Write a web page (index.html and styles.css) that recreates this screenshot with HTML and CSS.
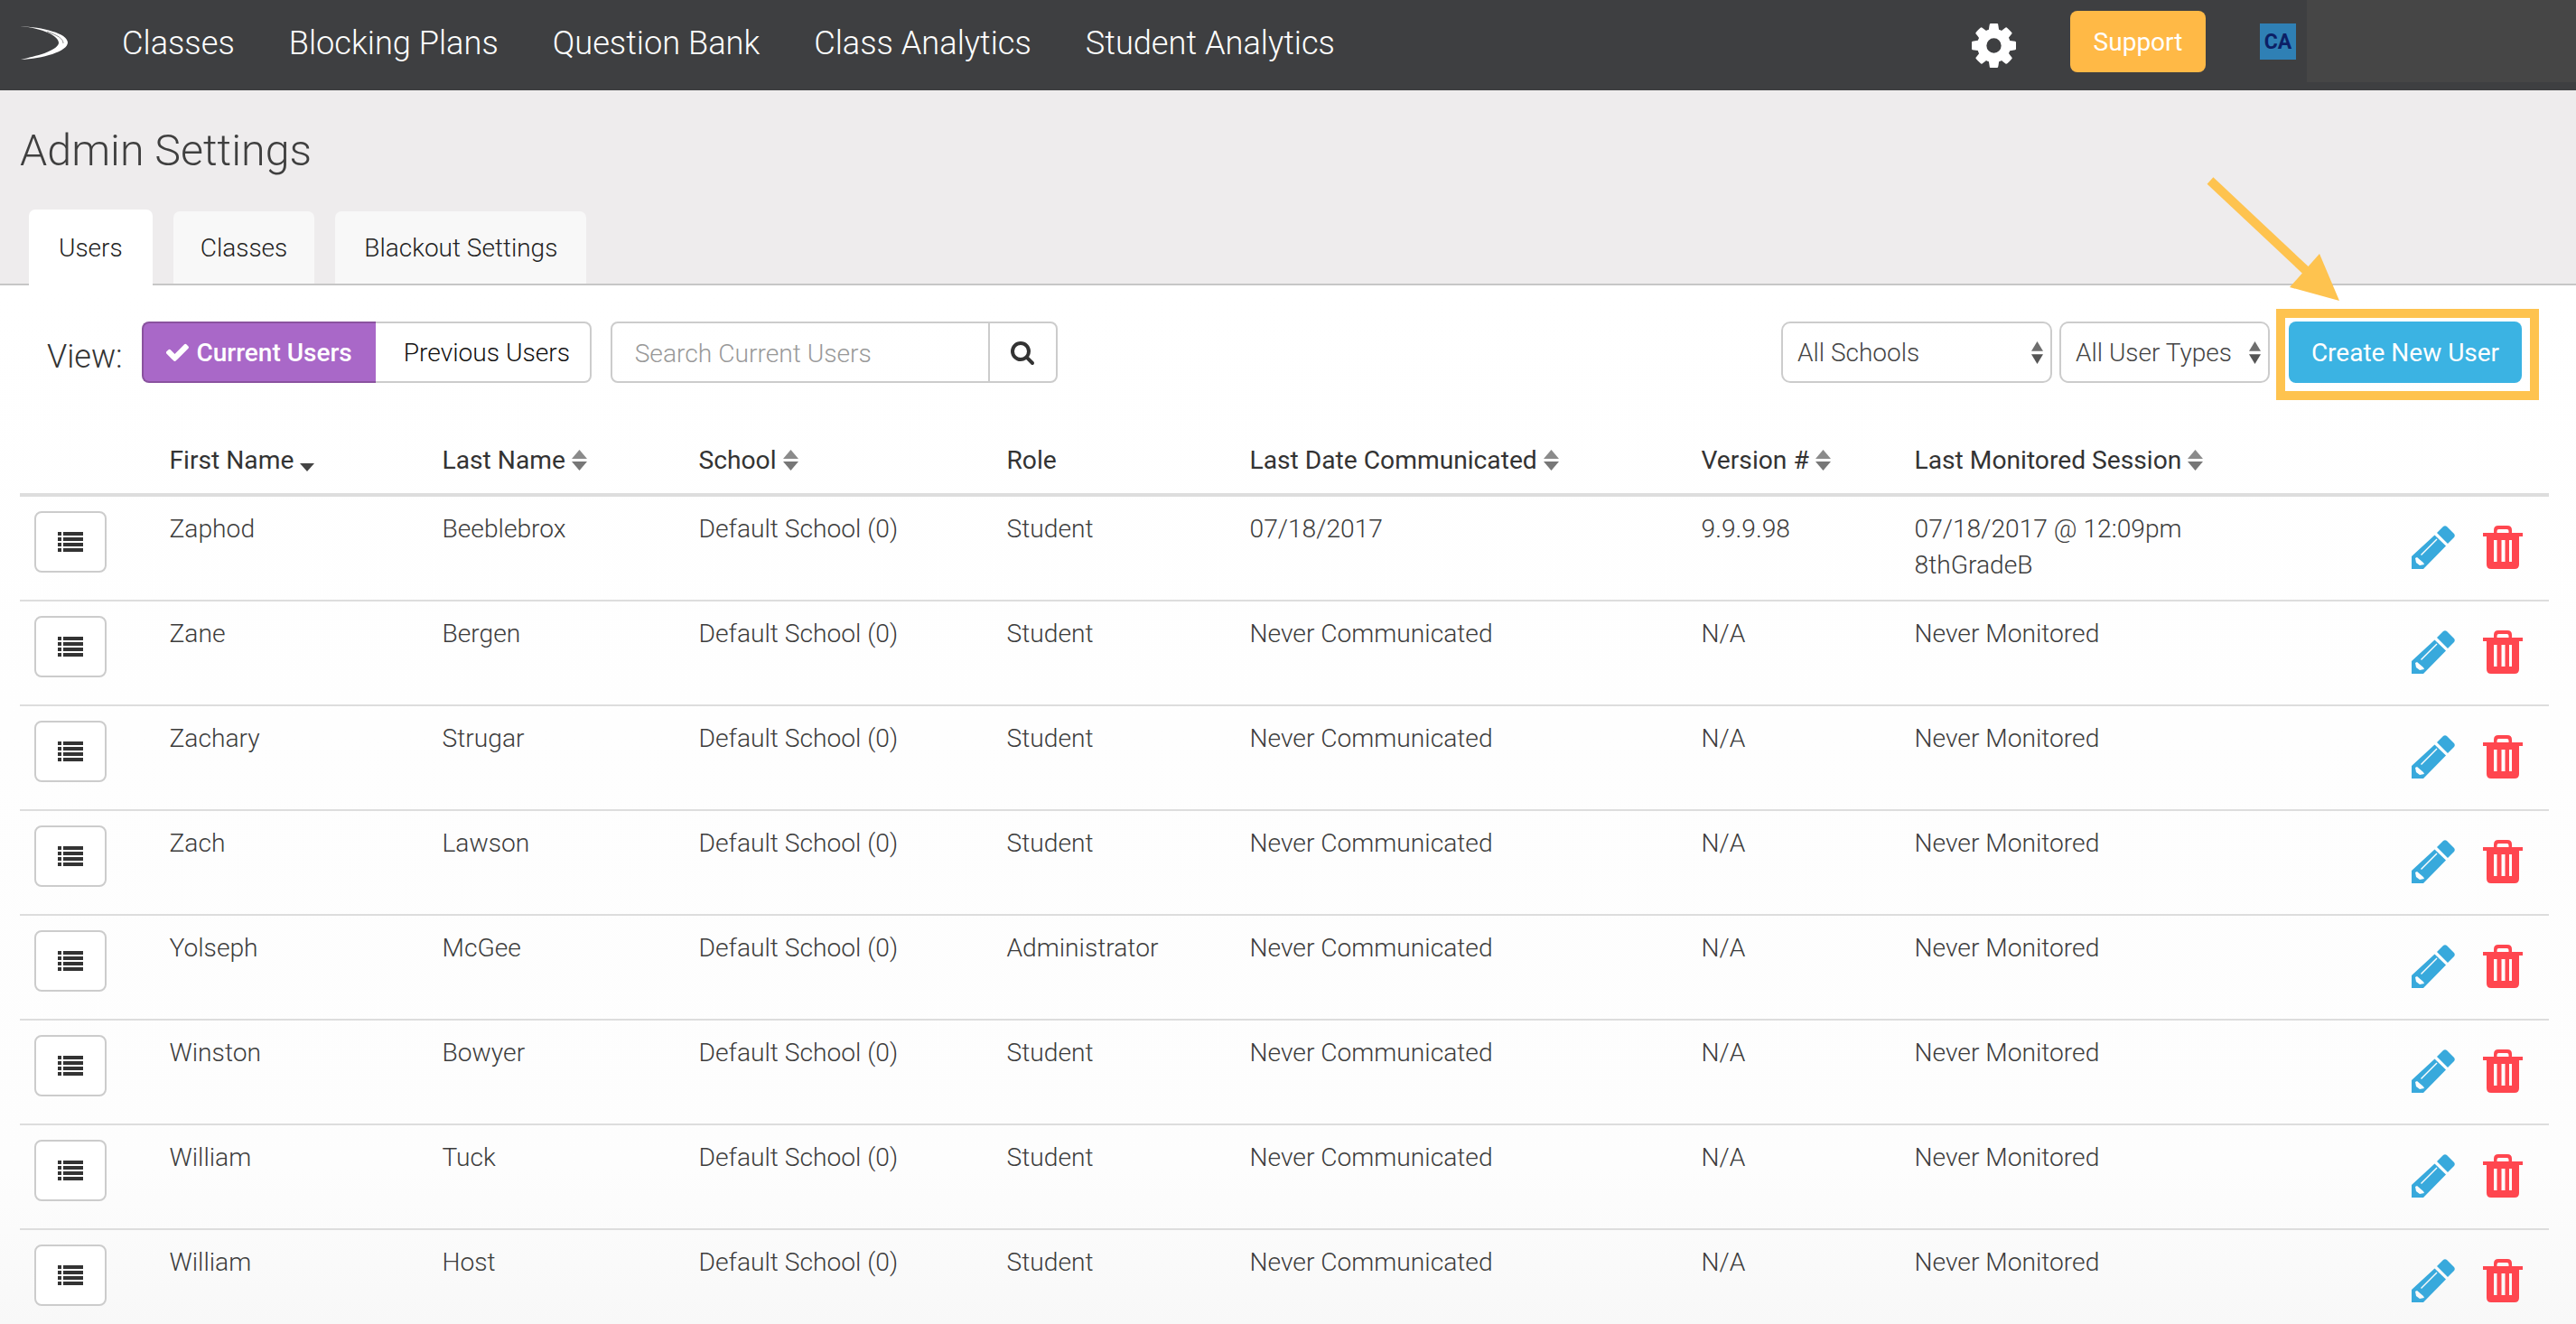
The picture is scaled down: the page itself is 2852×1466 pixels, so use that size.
FILE: index.html
```html
<!DOCTYPE html>
<html lang="en">
<head>
  <meta charset="UTF-8">
  <title>Admin Settings</title>
  <link rel="stylesheet" href="styles.css">
</head>
<body>
  <svg class="defs" width="0" height="0">
    <symbol id="i-list" viewBox="0 0 28 22">
      <path d="M0 0h4v4H0zM6 0h22v4H6zM0 6h4v4H0zM6 6h22v4H6zM0 12h4v4H0zM6 12h22v4H6zM0 18h4v4H0zM6 18h22v4H6z"/>
    </symbol>
    <symbol id="i-sort" viewBox="0 0 16 22" preserveAspectRatio="none">
      <path d="M8 0l8 9.500H0z" opacity="0.85"/>
      <path d="M0 12.500h16L8 22z"/>
    </symbol>
    <symbol id="i-pencil" viewBox="0 0 48 48">
      <path d="M28 8l7-7q2-1.500 4 0l8 8q1.500 2 0 4l-7 7z"/>
      <path fill-rule="evenodd" d="M25.500 10.500L38 22.500 13 48H0V34zM27.500 14.500L10 32l1 1 17.500-17.500zM4 36l1 5 4 3 5-1-1-2-7-6z"/>
    </symbol>
    <symbol id="i-trash" viewBox="0 0 44 48">
      <path fill-rule="evenodd" d="M12 8V5q0-5 5-5h10q5 0 5 5v3h12v4H40v31q0 5-5 5H9q-5 0-5-5V12H0V8zM15.500 8h13V6q0-2-2-2h-9q-2 0-2 2zM12 16v24h3.500V16zM20.500 16v24h4V16zM29 16v24h3V16z"/>
    </symbol>
  </svg>

  <nav class="navbar">
    <svg class="logo" viewBox="0 0 53 37">
      <path d="M0 0C25 1 53 8 53 18 53 28 25 36 1 37 18 33 40 28 43 19 44 11 25 2 0 0z" fill="#fff"/>
      <path d="M30 6C42 10 48 14 48 19" fill="none" stroke="#8d8d8d" stroke-width="1"/>
    </svg>
    <a class="nav-link">Classes</a>
    <a class="nav-link">Blocking Plans</a>
    <a class="nav-link">Question Bank</a>
    <a class="nav-link">Class Analytics</a>
    <a class="nav-link">Student Analytics</a>
    <svg class="gear" viewBox="128 128 1536 1536"><path fill="#fff" d="M1152 896q0-106-75-181t-181-75-181 75-75 181 75 181 181 75 181-75 75-181zm512-109v222q0 12-8 23t-20 13l-185 28q-19 54-39 91 35 50 107 138 10 12 10 25t-9 23q-27 37-99 108t-94 71q-12 0-26-9l-138-108q-44 23-91 38-16 136-29 186-7 28-36 28h-222q-14 0-24.500-8.500t-11.500-21.500l-28-184q-49-16-90-37l-141 107q-10 9-25 9-14 0-25-11-126-114-165-168-7-10-7-23 0-12 8-23 15-21 51-66.500t54-70.500q-27-50-41-99l-183-27q-13-2-21-12.500t-8-23.500v-222q0-12 8-23t19-13l186-28q14-46 39-92-40-57-107-138-10-12-10-24 0-10 9-23 26-36 98.500-107.500t94.500-71.500q13 0 26 10l138 107q44-23 91-38 16-136 29-186 7-28 36-28h222q14 0 24.500 8.500t11.500 21.500l28 184q49 16 90 37l142-107q9-9 24-9 13 0 25 10 129 119 165 170 7 8 7 22 0 12-8 23-15 21-51 66.500t-54 70.500q26 50 41 98l183 28q13 2 21 12.500t8 23.500z"/></svg>
    <a class="support-btn">Support</a>
    <span class="avatar">CA</span>
    <div class="nav-panel"></div>
  </nav>

  <header class="page-head">
    <h1 class="page-title">Admin Settings</h1>
    <div class="tabs">
      <a class="tab active">Users</a>
      <a class="tab">Classes</a>
      <a class="tab wide">Blackout Settings</a>
    </div>
  </header>

  <main class="content">
    <div class="toolbar">
      <span class="view-label">View:</span>
      <div class="btn-group">
        <a class="toggle on">
          <svg class="check" viewBox="128 300 1544 1200"><path fill="#fff" d="M1671 566q0 40-28 68l-724 724-136 136q-28 28-68 28t-68-28l-136-136-362-362q-28-28-28-68t28-68l136-136q28-28 68-28t68 28l294 295 656-657q28-28 68-28t68 28l136 136q28 28 28 68z"/></svg>
          Current Users
        </a>
        <a class="toggle">Previous Users</a>
      </div>
      <div class="search">
        <input class="search-input" type="text" placeholder="Search Current Users">
        <span class="search-btn">
          <svg class="search-icon" viewBox="0 0 1792 1792"><path fill="#333" d="M1216 832q0-185-131.500-316.500t-316.500-131.500-316.500 131.500-131.500 316.500 131.500 316.500 316.500 131.500 316.500-131.500 131.500-316.500zm512 832q0 52-38 90t-90 38q-54 0-90-38l-343-342q-179 124-399 124-143 0-273.500-55.500t-225-150-150-225-55.500-273.500 55.500-273.500 150-225 225-150 273.500-55.500 273.500 55.500 225 150 150 225 55.500 273.500q0 220-124 399l343 343q37 37 37 90z"/></svg>
        </span>
      </div>
      <div class="select schools">All Schools<svg class="select-arrows"><use href="#i-sort"/></svg></div>
      <div class="select types">All User Types<svg class="select-arrows"><use href="#i-sort"/></svg></div>
      <div class="highlight"><a class="create-btn">Create New User</a></div>
    </div>

    <table class="users">
      <colgroup>
        <col class="c-menu"><col class="c-first"><col class="c-last"><col class="c-school"><col class="c-role"><col class="c-date"><col class="c-version"><col class="c-session"><col>
      </colgroup>
      <thead>
        <tr>
          <th></th>
          <th>First Name <svg class="caret" viewBox="0 0 16 9"><path d="M0 0h16L8 9z"/></svg></th>
          <th>Last Name <svg class="sort"><use href="#i-sort"/></svg></th>
          <th>School <svg class="sort"><use href="#i-sort"/></svg></th>
          <th>Role</th>
          <th>Last Date Communicated <svg class="sort"><use href="#i-sort"/></svg></th>
          <th>Version # <svg class="sort"><use href="#i-sort"/></svg></th>
          <th>Last Monitored Session <svg class="sort"><use href="#i-sort"/></svg></th>
          <th></th>
        </tr>
      </thead>
      <tbody>
        <tr>
          <td><a class="menu-btn"><svg class="list-icon"><use href="#i-list"/></svg></a></td>
          <td>Zaphod</td><td>Beeblebrox</td><td>Default School (0)</td><td>Student</td><td>07/18/2017</td><td>9.9.9.98</td>
          <td>07/18/2017 @ 12:09pm<br>8thGradeB</td>
          <td><div class="actions"><svg class="pencil"><use href="#i-pencil"/></svg><svg class="trash"><use href="#i-trash"/></svg></div></td>
        </tr>
        <tr>
          <td><a class="menu-btn"><svg class="list-icon"><use href="#i-list"/></svg></a></td>
          <td>Zane</td><td>Bergen</td><td>Default School (0)</td><td>Student</td><td>Never Communicated</td><td>N/A</td>
          <td>Never Monitored</td>
          <td><div class="actions"><svg class="pencil"><use href="#i-pencil"/></svg><svg class="trash"><use href="#i-trash"/></svg></div></td>
        </tr>
        <tr>
          <td><a class="menu-btn"><svg class="list-icon"><use href="#i-list"/></svg></a></td>
          <td>Zachary</td><td>Strugar</td><td>Default School (0)</td><td>Student</td><td>Never Communicated</td><td>N/A</td>
          <td>Never Monitored</td>
          <td><div class="actions"><svg class="pencil"><use href="#i-pencil"/></svg><svg class="trash"><use href="#i-trash"/></svg></div></td>
        </tr>
        <tr>
          <td><a class="menu-btn"><svg class="list-icon"><use href="#i-list"/></svg></a></td>
          <td>Zach</td><td>Lawson</td><td>Default School (0)</td><td>Student</td><td>Never Communicated</td><td>N/A</td>
          <td>Never Monitored</td>
          <td><div class="actions"><svg class="pencil"><use href="#i-pencil"/></svg><svg class="trash"><use href="#i-trash"/></svg></div></td>
        </tr>
        <tr>
          <td><a class="menu-btn"><svg class="list-icon"><use href="#i-list"/></svg></a></td>
          <td>Yolseph</td><td>McGee</td><td>Default School (0)</td><td>Administrator</td><td>Never Communicated</td><td>N/A</td>
          <td>Never Monitored</td>
          <td><div class="actions"><svg class="pencil"><use href="#i-pencil"/></svg><svg class="trash"><use href="#i-trash"/></svg></div></td>
        </tr>
        <tr>
          <td><a class="menu-btn"><svg class="list-icon"><use href="#i-list"/></svg></a></td>
          <td>Winston</td><td>Bowyer</td><td>Default School (0)</td><td>Student</td><td>Never Communicated</td><td>N/A</td>
          <td>Never Monitored</td>
          <td><div class="actions"><svg class="pencil"><use href="#i-pencil"/></svg><svg class="trash"><use href="#i-trash"/></svg></div></td>
        </tr>
        <tr>
          <td><a class="menu-btn"><svg class="list-icon"><use href="#i-list"/></svg></a></td>
          <td>William</td><td>Tuck</td><td>Default School (0)</td><td>Student</td><td>Never Communicated</td><td>N/A</td>
          <td>Never Monitored</td>
          <td><div class="actions"><svg class="pencil"><use href="#i-pencil"/></svg><svg class="trash"><use href="#i-trash"/></svg></div></td>
        </tr>
        <tr>
          <td><a class="menu-btn"><svg class="list-icon"><use href="#i-list"/></svg></a></td>
          <td>William</td><td>Host</td><td>Default School (0)</td><td>Student</td><td>Never Communicated</td><td>N/A</td>
          <td>Never Monitored</td>
          <td><div class="actions"><svg class="pencil"><use href="#i-pencil"/></svg><svg class="trash"><use href="#i-trash"/></svg></div></td>
        </tr>
      </tbody>
    </table>

    <svg class="arrow" viewBox="0 0 160 150">
      <path d="M4 9L118 116" fill="none" stroke="#fec34f" stroke-width="10"/>
      <path d="M125 90L147 142 92 127z" fill="#fec34f"/>
    </svg>
  </main>
</body>
</html>
```

FILE: styles.css
```css
* {
  box-sizing: border-box;
}

html, body {
  height: 1466px;
  overflow: hidden;
}

body {
  margin: 0;
  font-family: Roboto, "Liberation Sans", sans-serif;
  font-weight: 300;
  font-size: 28px;
  color: #333;
  background: #fff;
}

.defs {
  position: absolute;
}

.navbar {
  display: flex;
  align-items: center;
  height: 100px;
  background: #3e3f41;
  padding-left: 22px;
}

.logo {
  width: 53px;
  height: 37px;
  margin-top: -6px;
  margin-right: 60px;
}

.nav-link {
  font-size: 36.200px;
  color: #fff;
  margin-right: 60px;
  margin-top: -6px;
}

.gear {
  width: 49px;
  height: 49px;
  margin-left: auto;
  margin-right: 60px;
}

.support-btn {
  display: flex;
  align-items: center;
  justify-content: center;
  width: 150px;
  height: 68px;
  margin-top: -8px;
  background: #ffb946;
  border-radius: 8px;
  color: #fff;
  font-size: 28px;
  font-weight: 400;
}

.avatar {
  display: flex;
  align-items: center;
  justify-content: center;
  width: 40px;
  height: 40px;
  margin-left: 60px;
  margin-right: 12px;
  margin-top: -8px;
  background: #2f80b5;
  color: #0c1f66;
  font-size: 23px;
  font-weight: 700;
}

.nav-panel {
  align-self: flex-start;
  width: 298px;
  height: 91px;
  background: #464646;
}

.page-head {
  background: #eeeced;
  padding-top: 37px;
  border-bottom: 2px solid #c6c6c6;
}

.page-title {
  margin: 0 0 35px 22px;
  font-size: 48.400px;
  font-weight: 300;
  line-height: 60px;
  color: #3f3f3f;
}

.tabs {
  display: flex;
  align-items: flex-end;
  gap: 23px;
  height: 82px;
  padding-left: 32px;
}

.tab {
  display: flex;
  align-items: center;
  height: 80px;
  padding: 0 30px;
  background: #f8f8f8;
  border-radius: 7px 7px 0 0;
  font-size: 28px;
  color: #222;
}

.tab.wide {
  padding: 0 32px;
}

.tab.active {
  height: 84px;
  margin-bottom: -2px;
  padding: 0 33px;
  background: #fff;
}

.content {
  position: relative;
  height: 1150px;
  padding-top: 40px;
  background: linear-gradient(#fff, #fdfdfd 85%, #f8f8f8);
}

.toolbar {
  display: flex;
  align-items: center;
  height: 68px;
  margin: 0 41px 50px 52px;
}

.view-label {
  font-size: 36px;
  margin-top: 10px;
  margin-right: 21px;
}

.btn-group {
  display: flex;
  height: 68px;
  margin-right: 21px;
}

.toggle {
  display: flex;
  align-items: center;
  width: 239px;
  height: 68px;
  padding-left: 31px;
  background: #fff;
  border: 2px solid #ccc;
  border-left: 0;
  border-radius: 0 8px 8px 0;
  font-size: 28.200px;
  color: #111;
}

.toggle.on {
  justify-content: center;
  width: 259px;
  padding-left: 0;
  background: #a968c8;
  border: 2px solid #8a529f;
  border-right: 0;
  border-radius: 8px 0 0 8px;
  font-size: 28px;
  color: #fff;
  font-weight: 500;
}

.check {
  width: 25px;
  height: 20px;
  margin-right: 8px;
}

.search {
  display: flex;
  width: 495px;
  height: 68px;
  border: 2px solid #ccc;
  border-radius: 8px;
  margin-right: auto;
}

.search-input {
  flex: 1;
  min-width: 0;
  padding: 3px 25px 0;
  border: 0;
  outline: 0;
  background: transparent;
  font-family: inherit;
  font-weight: 300;
  font-size: 28.200px;
}

.search-input::placeholder {
  color: #999;
}

.search-btn {
  display: flex;
  align-items: center;
  justify-content: center;
  width: 75px;
  border-left: 2px solid #ccc;
}

.search-icon {
  width: 28px;
  height: 28px;
}

.select {
  display: flex;
  align-items: center;
  justify-content: space-between;
  height: 68px;
  border: 2px solid #ccc;
  border-radius: 10px;
  padding: 0 8px 0 16px;
  font-size: 28px;
  color: #444;
}

.select.schools {
  width: 300px;
  margin-right: 8px;
}

.select.types {
  width: 233px;
}

.select-arrows {
  width: 13px;
  height: 25px;
  fill: #555;
}

.highlight {
  margin: -14px 0 -19px 7px;
  padding: 4px 9px 9px 4px;
  border: 10px solid #fec34f;
}

.create-btn {
  display: flex;
  align-items: center;
  justify-content: center;
  width: 258px;
  height: 68px;
  background: #3bb3e3;
  border-radius: 8px;
  color: #fff;
  font-size: 28px;
  font-weight: 400;
}

.users {
  width: 2800px;
  margin-left: 22px;
  table-layout: fixed;
  border-spacing: 0;
}

.c-menu { width: 165.500px; }
.c-first { width: 302px; }
.c-last { width: 284px; }
.c-school { width: 341px; }
.c-role { width: 269px; }
.c-date { width: 500px; }
.c-version { width: 236px; }
.c-session { width: 550.500px; }

.users th {
  height: 76px;
  padding: 0;
  border-bottom: 4px solid #ddd;
  text-align: left;
  font-weight: 400;
  line-height: 40px;
  font-size: 28.200px;
  color: #333;
  white-space: nowrap;
}

.users td {
  height: 116px;
  padding: 16px 0 0;
  border-bottom: 2px solid #ddd;
  vertical-align: top;
  line-height: 40px;
  font-size: 28.200px;
  color: #3c3c3c;
}

.sort {
  width: 17px;
  height: 23px;
  fill: #777;
  vertical-align: -2px;
}

.caret {
  width: 16px;
  height: 9px;
  fill: #444;
  vertical-align: -3px;
}

.menu-btn {
  display: flex;
  align-items: center;
  justify-content: center;
  width: 80px;
  height: 68px;
  margin-left: 16px;
  border: 2px solid #ccc;
  border-radius: 8px;
  background: #fff;
}

.list-icon {
  width: 28px;
  height: 22px;
  fill: #333;
}

.actions {
  display: flex;
  gap: 31px;
  padding-top: 16px;
}

.pencil {
  width: 48px;
  height: 48px;
  fill: #38a9dc;
}

.trash {
  width: 44px;
  height: 48px;
  fill: #ff464f;
}

/* annotation drawn over the page */
.arrow {
  position: absolute;
  left: 2443px;
  top: -125px;
  width: 160px;
  height: 150px;
}
```
